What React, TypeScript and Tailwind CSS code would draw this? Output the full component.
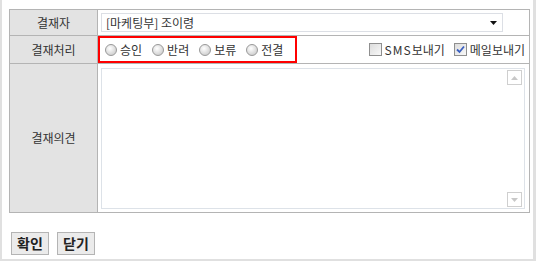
import { useState } from "react";

const OPTIONS = ["승인", "반려", "보류", "전결"];

function Radio({ label, checked, onClick }: { label: string; checked: boolean; onClick: () => void }) {
  return (
    <label className="flex items-center cursor-pointer" onClick={onClick}>
      <span className="w-[12px] h-[12px] rounded-full border border-[#9a9a9a] bg-[radial-gradient(circle_at_40%_35%,#ffffff,#d4d4d4_70%)] flex items-center justify-center">
        {checked && <span className="w-[4px] h-[4px] rounded-full bg-[#333]" />}
      </span>
      <span className="ml-[3px]">{label}</span>
    </label>
  );
}

function Check({ children, checked, onClick }: { children: React.ReactNode; checked: boolean; onClick: () => void }) {
  return (
    <label className="flex items-center cursor-pointer" onClick={onClick}>
      <span className="w-[13px] h-[13px] border border-[#8f8f8f] bg-[linear-gradient(135deg,#dcdcdc,#f8f8f8)] flex items-center justify-center">
        {checked && (
          <svg width="9" height="9" viewBox="0 0 9 9">
            <path d="M1 4.5 L3.5 7 L8 1.5" stroke="#3a5fc0" strokeWidth="1.8" fill="none" />
          </svg>
        )}
      </span>
      <span className="ml-[3px]">{children}</span>
    </label>
  );
}

export default function App() {
  const [choice, setChoice] = useState<string | null>(null);
  const [sms, setSms] = useState(false);
  const [mail, setMail] = useState(true);

  return (
    <div
      className="w-[536px] h-[261px] bg-white border-l-2 border-r-[3px] border-b-2 border-[#e0e0e0] pl-[7px] pt-[9px] text-[12px] text-[#333]"
      style={{ fontFamily: '"Noto Sans CJK KR", "Noto Sans", sans-serif' }}
    >
      <table className="w-[521px] border-collapse">
        <tbody>
          <tr className="h-[26px]">
            <th className="w-[88px] border border-[#b4b4b4] bg-[#e3e3e3] font-normal">결재자</th>
            <td className="border border-[#b4b4b4] pl-[3px] pr-[26px]">
              <div className="h-[19px] border border-[#dcdfe5] flex items-center justify-between pl-[4px] pr-[5px]">
                <span>[마케팅부] 조이령</span>
                <svg width="7" height="4" viewBox="0 0 7 4">
                  <path d="M0 0 H7 L3.5 4 Z" fill="#111" />
                </svg>
              </div>
            </td>
          </tr>
          <tr className="h-[27px]">
            <th className="border border-[#b4b4b4] bg-[#e3e3e3] font-normal">결재처리</th>
            <td className="border border-[#b4b4b4] p-0">
              <div className="flex items-center justify-between pr-[4px]">
                <div className="w-[199px] h-[27px] border-2 border-[#ff0000] flex items-center gap-[10px] pl-[5px]">
                  {OPTIONS.map((o) => (
                    <Radio key={o} label={o} checked={choice === o} onClick={() => setChoice(o)} />
                  ))}
                </div>
                <div className="flex items-center gap-[9px]">
                  <Check checked={sms} onClick={() => setSms(!sms)}>
                    <span className="tracking-[1px]">SMS</span>보내기
                  </Check>
                  <Check checked={mail} onClick={() => setMail(!mail)}>
                    메일보내기
                  </Check>
                </div>
              </div>
            </td>
          </tr>
          <tr className="h-[149px]">
            <th className="border border-[#b4b4b4] bg-[#e3e3e3] font-normal">결재의견</th>
            <td className="border border-[#b4b4b4] pl-[3px] pr-[4px] pt-[4px] pb-[3px]">
              <div className="h-[141px] border border-[#dde2e8] flex">
                <div className="flex-1" />
                <div className="w-[17px] flex flex-col justify-between py-[1px]">
                  <span className="w-[15px] h-[15px] border border-[#cfcfcf] flex items-center justify-center">
                    <svg width="7" height="4" viewBox="0 0 7 4">
                      <path d="M0 4 H7 L3.5 0 Z" fill="#c8c8c8" />
                    </svg>
                  </span>
                  <span className="w-[15px] h-[15px] border border-[#cfcfcf] flex items-center justify-center">
                    <svg width="7" height="4" viewBox="0 0 7 4">
                      <path d="M0 0 H7 L3.5 4 Z" fill="#c8c8c8" />
                    </svg>
                  </span>
                </div>
              </div>
            </td>
          </tr>
        </tbody>
      </table>
      <div className="flex gap-[8px] mt-[19px] pl-[2px]">
        <button className="h-[23px] w-[38px] border border-[#b4b4b4] bg-[#ebebeb] text-[14px] font-bold text-[#222]">확인</button>
        <button className="h-[23px] w-[38px] border border-[#b4b4b4] bg-[#ebebeb] text-[14px] font-bold text-[#222]">닫기</button>
      </div>
    </div>
  );
}
